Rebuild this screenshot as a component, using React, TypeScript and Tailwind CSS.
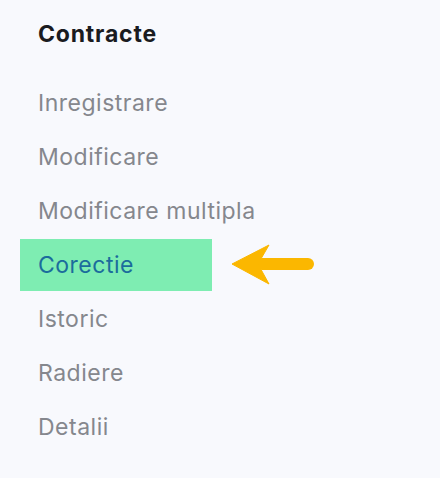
import React from "react";

const items = ["Inregistrare", "Modificare", "Modificare multipla", "Corectie", "Istoric", "Radiere", "Detalii"];

export default function App() {
  return (
    <div
      className="relative w-[440px] h-[478px] bg-[#f8f9fd] overflow-hidden"
      style={{ fontFamily: "Inter, 'Noto Sans', sans-serif" }}
    >
      <div className="pl-[20px] pt-[20px]">
        <div className="pl-[18px] h-[28px] flex items-center text-[23px] font-bold tracking-[0.8px] text-[#1a1b1f] leading-none">
          Contracte
        </div>
        <div className="mt-[29px] flex flex-col gap-[2px] w-[192px]">
          {items.map((t) => {
            const active = t === "Corectie";
            return (
              <div
                key={t}
                className={
                  active
                    ? "h-[52px] flex items-center pl-[18px] bg-[#7eedb2] text-[#1b6c9c] text-[23px] tracking-[0.5px] whitespace-nowrap"
                    : "h-[52px] flex items-center pl-[18px] text-[#85878d] text-[23px] tracking-[0.5px] whitespace-nowrap"
                }
              >
                {t}
              </div>
            );
          })}
        </div>
      </div>
      <svg className="absolute left-0 top-0" width="440" height="478" viewBox="0 0 440 478">
        <line x1="262" y1="264" x2="308" y2="264" stroke="#fbb700" strokeWidth="12" strokeLinecap="round" />
        <path d="M232 264 L269 245 L258 264 L269 284 Z" fill="#fbb700" strokeLinejoin="round" stroke="#fbb700" strokeWidth="1" />
      </svg>
    </div>
  );
}
